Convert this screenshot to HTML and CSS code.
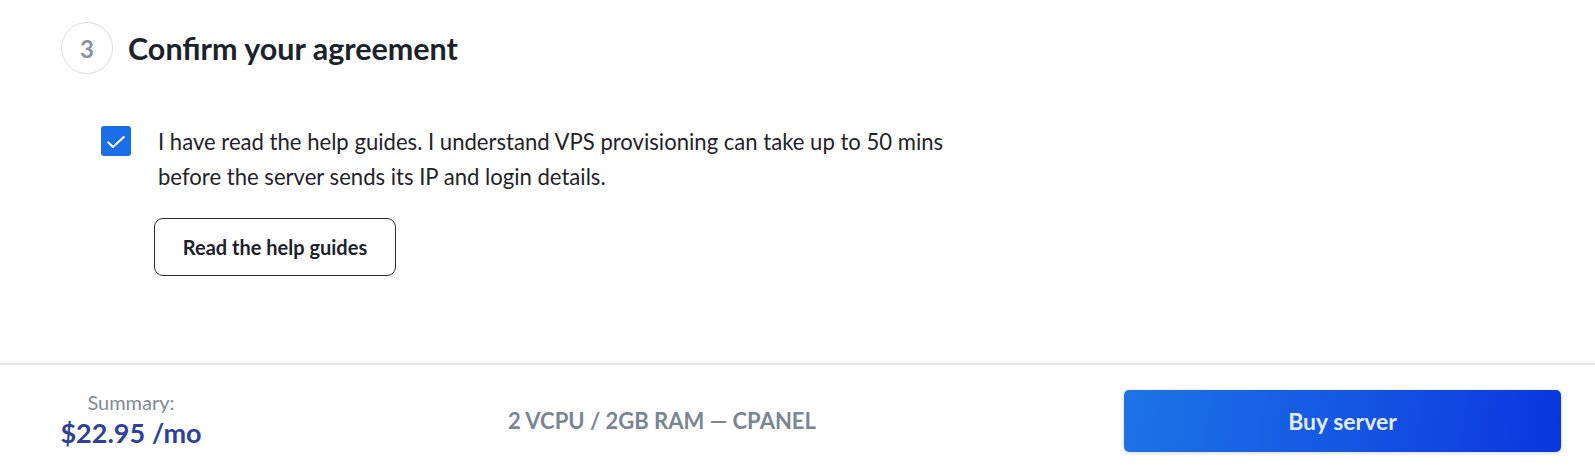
FILE: index.html
```html
<!DOCTYPE html>
<html lang="en">
<head>
<meta charset="utf-8">
<title>Confirm your agreement</title>
<link rel="stylesheet" href="styles.css">
</head>
<body>
<main class="page">
  <section class="step">
    <header class="step-head">
      <div class="step-num">3</div>
      <h2 class="step-title">Confirm your agreement</h2>
    </header>
    <div class="agree">
      <span class="check" role="checkbox" aria-checked="true">
        <svg viewBox="0 0 30 30" width="30" height="30" aria-hidden="true"><path d="M7.2 16.4 L12 21 L22.8 11" fill="none" stroke="#ffffff" stroke-width="2" stroke-linecap="round" stroke-linejoin="round"/></svg>
      </span>
      <div class="agree-body">
        <p class="agree-text">I have read the help guides. I understand VPS provisioning can take up to 50 mins<br>before the server sends its IP and login details.</p>
        <button class="btn-outline" type="button">Read the help guides</button>
      </div>
    </div>
  </section>
  <footer class="summary-bar">
    <div class="summary">
      <div class="summary-label">Summary:</div>
      <div class="summary-price">$22.95 /mo</div>
    </div>
    <div class="summary-plan">2 VCPU / 2GB RAM — CPANEL</div>
    <button class="btn-buy" type="button">Buy server</button>
  </footer>
</main>
</body>
</html>
```

FILE: styles.css
```css
html, body {
  margin: 0;
  padding: 0;
  background: #ffffff;
}
body {
  font-family: Lato, "Open Sans", "Liberation Sans", sans-serif;
  color: #1f2329;
}
.page {
  width: 1595px;
  height: 470px;
  display: flex;
  flex-direction: column;
  overflow: hidden;
}
.step {
  height: 363px;
  flex: none;
  box-sizing: border-box;
  padding: 22px 0 0 61px;
}
.step-head {
  display: flex;
  align-items: center;
  gap: 15px;
}
.step-num {
  width: 52px;
  height: 52px;
  box-sizing: border-box;
  border: 1px solid #d9dde2;
  border-radius: 50%;
  display: flex;
  align-items: center;
  justify-content: center;
  font-size: 24px;
  font-weight: 700;
  color: #8a939d;
}
.step-title {
  margin: 0;
  font-size: 30.5px;
  font-weight: 700;
  color: #1c222b;
  line-height: 36px;
}
.agree {
  display: flex;
  align-items: flex-start;
  margin: 50px 0 0 40px;
}
.check {
  width: 30px;
  height: 30px;
  border-radius: 3px;
  background: #1a6ee8;
  display: flex;
  flex: none;
  margin-top: 2px;
}
.agree-body {
  margin-left: 23px;
  display: flex;
  flex-direction: column;
  align-items: flex-start;
}
.agree-text {
  margin: 0;
  padding-left: 4px;
  font-size: 22.1px;
  line-height: 35px;
  color: #1f2329;
}
.btn-outline {
  margin-top: 24px;
  width: 242px;
  height: 58px;
  box-sizing: border-box;
  border: 1px solid #2a2e33;
  border-radius: 9px;
  background: #ffffff;
  font-family: inherit;
  font-size: 20px;
  font-weight: 700;
  color: #1c222b;
  cursor: pointer;
}
.summary-bar {
  flex: 1;
  border-top: 2px solid #e2e5e9;
  box-shadow: 0 -1px 2px rgba(0, 0, 0, 0.04);
  display: flex;
  align-items: flex-start;
  padding: 25px 34px 0 31px;
}
.summary {
  width: 200px;
  text-align: center;
  margin-top: 0;
}
.summary-label {
  font-size: 20px;
  line-height: 24px;
  color: #7f8a97;
}
.summary-price {
  margin-top: 3px;
  font-size: 27px;
  line-height: 32px;
  font-weight: 700;
  color: #2d419c;
}
.summary-plan {
  flex: 1;
  margin-right: 31px;
  text-align: center;
  font-size: 22px;
  line-height: 62px;
  font-weight: 700;
  color: #7a8693;
}
.btn-buy {
  width: 437px;
  height: 62px;
  border: none;
  border-radius: 5px;
  background: linear-gradient(100deg, #1e74e7 0%, #1557e3 50%, #0b35df 100%);
  box-shadow: 0 1px 4px rgba(20, 40, 90, 0.18);
  font-family: inherit;
  font-size: 23px;
  font-weight: 700;
  color: rgba(255, 255, 255, 0.9);
  cursor: pointer;
}
```
